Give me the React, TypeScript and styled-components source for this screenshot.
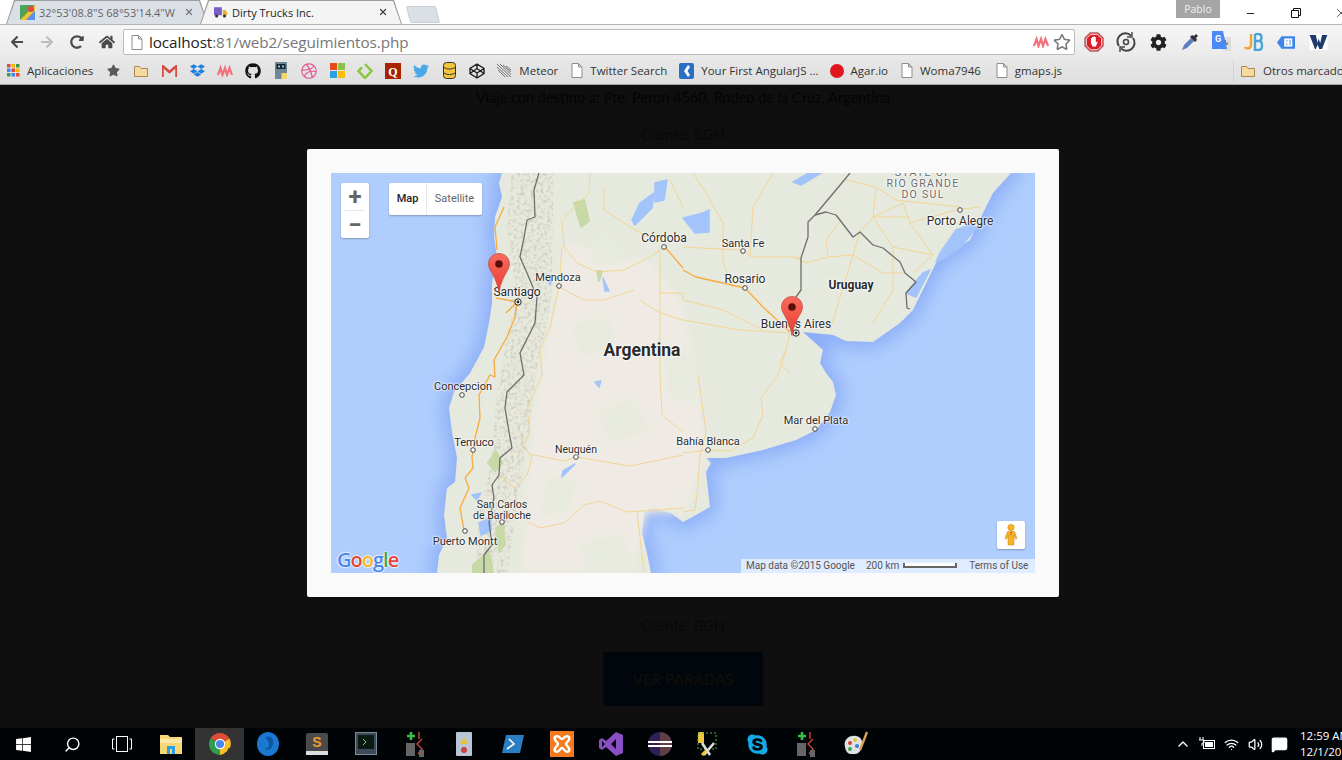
import React from "react";
import styled, { createGlobalStyle } from "styled-components";
import { FaGithub, FaDropbox, FaDribbble, FaTwitter, FaStar, FaCog, FaHome, FaArrowLeft, FaArrowRight, FaRedoAlt, FaSkype, FaWindows, FaRegStar } from "react-icons/fa";
import { ChevronUp, Volume2, Wifi, Search, MessageSquare, Minus, X } from "lucide-react";

const GlobalStyle = createGlobalStyle`
  html, body {
    margin: 0;
    height: 760px;
    overflow: hidden;
    background: #0f0f0f;
  }
  #root { width: 1342px; height: 760px; overflow: hidden; }
`;

/* the capture is a 1366 wide desktop cut off at 1342 */
const Desktop = styled.div`
  width: 1366px;
  height: 760px;
  display: flex;
  flex-direction: column;
  position: relative;
  font-family: "Open Sans", "Liberation Sans", sans-serif;
  overflow: hidden;
`;

const TabStrip = styled.div`
  height: 24px;
  display: flex;
  background: #fff;
  padding-left: 6px;
  position: relative;
`;

const Tab = styled.div<{ $active?: boolean }>`
  width: 202px;
  height: 24px;
  margin-right: -8px;
  padding: 0 14px;
  box-sizing: border-box;
  display: flex;
  align-items: center;
  gap: 4px;
  font-size: 11px;
  color: ${(p) => (p.$active ? "#222" : "#666")};
  background: #9d9d9d;
  clip-path: polygon(0 100%, 8px 0, calc(100% - 8px) 0, 100% 100%);
  position: relative;
  z-index: ${(p) => (p.$active ? 2 : 1)};
  &::before {
    content: "";
    position: absolute;
    inset: 1px 1px 0 1px;
    background: ${(p) => (p.$active ? "#f4f4f4" : "#dbe0e7")};
    clip-path: polygon(0 100%, 8px 0, calc(100% - 8px) 0, 100% 100%);
  }
  & > * { position: relative; }
`;

const TabTitle = styled.span`
  flex: 1;
  white-space: nowrap;
  overflow: hidden;
  margin-right: 4px;
`;

const NewTab = styled.div`
  width: 30px;
  height: 17px;
  margin: 6px 0 0 14px;
  background: #dbe0e7;
  border: 1px solid #c8cdd4;
  box-sizing: border-box;
  transform: skewX(14deg);
  border-radius: 2px;
`;

const ProfileBadge = styled.div`
  position: absolute;
  left: 1176px;
  top: 0;
  width: 44px;
  height: 18px;
  background: #a5a5a5;
  color: #eee;
  font-size: 10.5px;
  display: flex;
  align-items: center;
  justify-content: center;
`;

const WindowButtons = styled.div`
  position: absolute;
  top: 2px;
  left: 1228px;
  display: flex;
  color: #111;
`;

const WindowButton = styled.div`
  width: 45px;
  height: 22px;
  display: flex;
  align-items: center;
  justify-content: center;
`;

const Toolbar = styled.div`
  height: 35px;
  box-sizing: border-box;
  border-top: 1px solid #b4b4b4;
  background: linear-gradient(#f6f6f6, #e9e9e9);
  display: flex;
  align-items: center;
`;

const NavButton = styled.div<{ $dim?: boolean }>`
  width: 30px;
  height: 24px;
  display: flex;
  align-items: center;
  justify-content: center;
  color: ${(p) => (p.$dim ? "#bdbdbd" : "#4a4a4a")};
`;

const NavGroup = styled.div`
  display: flex;
  padding-left: 2px;
  width: 123px;
  box-sizing: border-box;
  flex: none;
`;

const Omnibox = styled.div`
  width: 952px;
  height: 26px;
  flex: none;
  box-sizing: border-box;
  background: #fff;
  border: 1px solid #bcbcbc;
  border-radius: 2px;
  display: flex;
  align-items: center;
  padding: 0 3px 0 7px;
  font-family: "Open Sans", sans-serif;
  font-size: 15.3px;
  letter-spacing: -0.1px;
`;

const UrlHost = styled.span`
  color: #222;
  margin-left: 6px;
`;

const UrlRest = styled.span`
  color: #777;
  flex: 1;
`;

const BookmarkStar = styled(FaRegStar)`
  margin-left: 4px;
`;

const Extensions = styled.div`
  display: flex;
  padding-left: 3px;
`;

const Extension = styled.div`
  width: 32px;
  height: 26px;
  display: flex;
  align-items: center;
  justify-content: center;
`;

const BookmarkBar = styled.div`
  height: 26px;
  box-sizing: border-box;
  border-bottom: 1px solid #a8a8a8;
  background: linear-gradient(#e7e7e7, #dfdfdf);
  display: flex;
  align-items: center;
  padding: 0 0 2px 7px;
  font-size: 11.5px;
  color: #333;
  white-space: nowrap;
`;

const Bookmark = styled.div<{ $gap?: number }>`
  display: flex;
  align-items: center;
  gap: 7px;
  margin-right: ${(p) => p.$gap ?? 12}px;
`;

const BookmarkIcon = styled.div`
  width: 28px;
  height: 16px;
  flex: none;
  display: flex;
  align-items: center;
  justify-content: center;
`;

const BookmarkIconRow = styled.div`
  display: flex;
  margin-right: 5px;
`;

const OtherBookmarks = styled(Bookmark)`
  margin-left: auto;
  width: 126px;
  border-left: 1px solid #d2d2d2;
  padding-left: 6px;
  height: 22px;
  margin-right: 0;
`;

const PageBody = styled.main`
  flex: 1;
  background: #0f0f0f;
  display: flex;
  flex-direction: column;
  align-items: center;
  padding: 3px 0 22px;
  font-family: Lato, "Open Sans", sans-serif;
  font-size: 14.5px;
  color: #040404;
`;

const TripLine = styled.div`
  line-height: 20px;
`;

const ClientLine = styled.div<{ $push?: boolean }>`
  line-height: 20px;
  margin-top: ${(p) => (p.$push ? "auto" : "17px")};
  color: #080808;
`;

const StopsButton = styled.div`
  width: 160px;
  height: 54px;
  margin-top: 16px;
  background: #00060c;
  border-radius: 2px;
  display: flex;
  align-items: center;
  justify-content: center;
  font-size: 15px;
  font-weight: 700;
  color: #0f0c09;
`;

const Overlay = styled.div`
  position: absolute;
  left: 0;
  right: 0;
  top: 149px;
  display: flex;
  justify-content: center;
`;

const Modal = styled.div`
  background: #fafafa;
  padding: 24px;
  border-radius: 2px;
`;

const MapCanvas = styled.div`
  width: 704px;
  height: 400px;
  position: relative;
  overflow: hidden;
  background: #afcdfd;
  font-family: Roboto, sans-serif;
`;

const MapDrawing = styled.svg`
  display: block;
`;

const PlaceLabel = styled.div<{ $x: number; $y: number; $size?: number; $bold?: boolean }>`
  position: absolute;
  left: ${(p) => p.$x}px;
  top: ${(p) => p.$y + 1}px;
  transform: translate(-50%, -50%);
  font-size: ${(p) => p.$size ?? 11}px;
  font-weight: ${(p) => (p.$bold ? 700 : 400)};
  line-height: 1.05;
  color: #2b2b2b;
  text-align: center;
  white-space: nowrap;
  text-shadow: 0 0 2px #fff, 0 0 2px #fff, 0 0 3px #fff;
`;

const RegionLabel = styled(PlaceLabel)`
  color: #6b6b6b;
  letter-spacing: 1.3px;
  font-size: 10.5px;
`;

const PinIcon = styled.svg<{ $x: number; $y: number }>`
  position: absolute;
  left: ${(p) => p.$x}px;
  top: ${(p) => p.$y}px;
`;

const ZoomControl = styled.div`
  position: absolute;
  left: 10px;
  top: 10px;
  width: 28px;
  height: 55px;
  background: #fff;
  border-radius: 2px;
  box-shadow: 0 1px 2px rgba(0, 0, 0, 0.25);
  display: flex;
  flex-direction: column;
  align-items: center;
  color: #666;
`;

const ZoomButton = styled.div`
  flex: 1;
  width: 100%;
  display: flex;
  align-items: center;
  justify-content: center;
  font-size: 24px;
  font-weight: 700;
  line-height: 1;
`;

const ZoomDivider = styled.div`
  width: 20px;
  height: 1px;
  background: #e6e6e6;
`;

const MapTypeControl = styled.div`
  position: absolute;
  left: 58px;
  top: 10px;
  height: 32px;
  width: 93px;
  display: flex;
  background: #fff;
  border-radius: 2px;
  box-shadow: 0 1px 2px rgba(0, 0, 0, 0.25);
  font-size: 11px;
`;

const MapTypeButton = styled.div<{ $active?: boolean }>`
  display: flex;
  align-items: center;
  justify-content: center;
  padding-bottom: 2px;
  width: ${(p) => (p.$active ? "38px" : "55px")};
  color: ${(p) => (p.$active ? "#222" : "#666")};
  font-weight: ${(p) => (p.$active ? 500 : 400)};
  border-right: ${(p) => (p.$active ? "1px solid #e6e6e6" : "none")};
  box-sizing: border-box;
`;

const PegmanBox = styled.div`
  position: absolute;
  right: 10px;
  bottom: 24px;
  width: 28px;
  height: 28px;
  background: #fff;
  border-radius: 2px;
  box-shadow: 0 1px 2px rgba(0, 0, 0, 0.25);
  display: flex;
  align-items: center;
  justify-content: center;
`;

const MapFooter = styled.div`
  position: absolute;
  right: 0;
  bottom: 0;
  height: 14px;
  width: 294px;
  box-sizing: border-box;
  padding: 0 0 1px 5px;
  background: rgba(255, 255, 255, 0.6);
  display: flex;
  align-items: center;
  font-size: 10px;
  color: #555;
  white-space: nowrap;
`;

const MapData = styled.span`
  width: 120px;
`;

const ScaleBar = styled.div`
  width: 54px;
  height: 5px;
  margin: 0 12px 0 4px;
  background: #fff;
  border: 2px solid #666;
  border-top: none;
  box-sizing: border-box;
`;

const GoogleLogo = styled.div`
  position: absolute;
  left: 6px;
  bottom: 0;
  font-family: "Open Sans", sans-serif;
  font-size: 20px;
  font-weight: 600;
  line-height: 26px;
  letter-spacing: -1px;
  text-shadow: 0 0 2px #fff, 0 0 2px #fff, 0 0 2px #fff;
`;

const Letter = styled.span<{ $c: string }>`
  color: ${(p) => p.$c};
`;

const Taskbar = styled.footer`
  height: 32px;
  background: #010406;
  display: flex;
  align-items: center;
  color: #fff;
`;

const TaskItem = styled.div<{ $active?: boolean }>`
  width: 48.9px;
  height: 32px;
  flex: none;
  display: flex;
  align-items: center;
  justify-content: center;
  background: ${(p) => (p.$active ? "#333" : "transparent")};
  &:first-child { margin-left: -0.5px; }
`;

const MirroredSearch = styled(Search)`
  transform: scaleX(-1);
`;

const Tray = styled.div`
  margin-left: auto;
  display: flex;
  align-items: center;
  height: 32px;
`;

const TrayIcon = styled.div`
  width: 24px;
  display: flex;
  justify-content: center;
`;

const Clock = styled.div`
  width: 66px;
  margin-left: 9px;
  font-size: 11.5px;
  line-height: 16px;
  white-space: nowrap;
`;

type P = number[][];
const d = (pts: P) => pts.map((p, i) => `${i ? "L" : "M"}${p[0]} ${p[1]}`).join("");

const land: P = [[171,0],[168,10],[171,24],[164,44],[163,64],[166,84],[161,110],[161,130],[158,150],[153,174],[139,200],[123,219],[118,235],[121,259],[126,285],[124,309],[116,315],[113,342],[116,365],[108,382],[106,400],[320,400],[316,380],[311,360],[313,340],[320,335],[340,340],[352,349],[365,342],[379,334],[375,299],[380,290],[375,285],[395,285],[432,277],[465,267],[485,257],[499,239],[505,222],[502,209],[495,200],[489,190],[492,177],[472,159],[502,162],[515,168],[542,169],[569,150],[582,137],[605,90],[639,67],[652,40],[662,20],[680,0]];
const pampa: P = [[235,70],[320,90],[350,130],[370,230],[375,285],[352,340],[316,340],[300,400],[190,400],[195,320],[205,230],[225,120]];
const andes: P = [[180,0],[222,0],[222,60],[220,130],[205,200],[198,260],[186,330],[176,400],[145,400],[148,340],[160,290],[165,230],[175,170],[183,110],[176,60]];
const blotches: P[] = [
  [[255,55],[290,60],[300,90],[262,92]],
  [[240,150],[275,140],[285,170],[250,185]],
  [[265,240],[300,225],[320,255],[280,270]],
  [[215,300],[245,310],[235,345],[210,340]],
  [[330,170],[360,180],[365,230],[335,225]],
  [[250,370],[290,360],[300,395],[255,400]],
];
const border: P[] = [
  [[208,0],[203,17],[204,44],[196,47],[193,65],[189,84],[196,100],[206,124],[204,150],[189,180],[193,202],[176,219],[174,235],[178,259],[181,275],[169,285],[168,302],[161,312],[163,325],[158,349],[161,372],[153,382],[153,400]],
  [[519,0],[505,17],[484,42],[477,49],[477,64],[470,85],[470,117],[465,124]],
  [[484,42],[495,39],[505,42],[522,64],[529,59],[542,72],[552,75],[569,89],[574,100],[585,109],[575,120],[576,135],[579,136]],
];
const highways: P[] = [
  [[173,34],[164,54],[166,77]],
  [[186,129],[184,144],[176,164],[163,187],[164,204],[159,202],[148,222],[149,245],[144,265],[141,285],[142,295],[134,305],[138,315],[129,335],[133,357]],
  [[165,125],[186,129],[175,140]],
  [[352,97],[365,104],[414,115],[432,134],[459,159]],
  [[334,74],[352,95]],
];
const roads: P[] = [
  [[231,47],[233,74],[246,90],[266,99],[293,97],[319,84],[333,74]],
  [[228,114],[253,127],[273,127],[303,117]],
  [[329,120],[352,120],[352,127],[392,137],[432,157]],
  [[309,127],[329,140],[352,147],[409,157],[459,160],[455,177],[449,190],[459,200]],
  [[329,77],[329,202],[331,242],[352,259]],
  [[273,14],[273,37],[299,54],[323,67]],
  [[259,0],[258,20],[233,44]],
  [[339,7],[352,34]],
  [[231,74],[228,114],[219,154],[209,177],[211,202],[196,235],[199,259],[193,272],[201,285],[196,302],[184,315],[168,302]],
  [[199,281],[233,288],[246,284],[269,288],[299,293],[352,282]],
  [[196,349],[209,355],[233,350],[253,332],[269,328],[296,339],[352,335]],
  [[306,339],[313,399]],
  [[367,202],[375,259],[369,282],[367,312],[364,337],[352,339]],
  [[352,280],[377,277],[399,278],[422,265],[432,242],[430,225],[447,202],[455,177]],
  [[352,74],[409,77],[422,84],[462,84],[475,90],[497,84],[495,67],[509,49]],
  [[362,0],[375,20],[392,50],[392,90],[402,115]],
  [[442,0],[422,34],[419,84]],
  [[522,82],[499,157]],
  [[497,84],[522,82],[552,100],[572,100]],
  [[529,59],[522,82]],
  [[562,74],[562,117],[542,150]],
  [[602,82],[582,100]],
  [[562,74],[602,82],[579,50],[625,37],[649,34]],
  [[545,14],[542,44],[529,59]],
  [[579,44],[542,44],[572,30],[579,50]],
  [[515,7],[545,14],[565,27],[629,34]],
  [[542,44],[562,74]],
  [[470,85],[462,84]],
];
const water: P[] = [
  [[324,10],[336,7],[333,27],[324,29]],
  [[301,47],[309,30],[323,20],[321,35],[304,52]],
  [[352,45],[372,40],[378,37],[378,59],[364,60]],
  [[462,9],[478,0],[490,0],[470,12]],
  [[605,89],[609,80],[625,57],[642,51],[645,55],[630,74],[615,84]],
  [[575,120],[592,100],[599,97],[585,124]],
  [[217,108],[222,104],[219,112]],
  [[272,105],[278,118],[274,118]],
  [[232,298],[244,291],[231,304]],
  [[148,350],[160,345],[160,358],[150,362]],
  [[141,322],[150,320],[146,327]],
  [[270,208],[268,214],[264,209]],
];
const greens: P[] = [
  [[243,30],[253,27],[258,48],[250,54]],
  [[266,98],[271,98],[268,108]],
  [[157,290],[165,278],[171,290],[164,298]],
  [[165,355],[172,350],[174,372],[168,378]],
  [[142,392],[158,378],[162,400],[142,400]],
];

type DotProps = { x: number; y: number; major?: boolean };
function CityDot({ x, y, major }: DotProps) {
  return major ? (
    <g>
      <circle cx={x} cy={y} r={3.2} fill="#fff" stroke="#222" />
      <circle cx={x} cy={y} r={1.4} fill="#222" />
    </g>
  ) : (
    <circle cx={x} cy={y} r={2.3} fill="#fff" stroke="#444" />
  );
}

function MapPin({ x, y }: { x: number; y: number }) {
  return (
    <PinIcon $x={x} $y={y} width={22} height={40} viewBox="0 0 22 40">
      <defs>
        <linearGradient id="pinFill" x1="0" y1="0" x2="0" y2="1">
          <stop offset="0" stopColor="#f76c60" />
          <stop offset="1" stopColor="#ea3b2e" />
        </linearGradient>
      </defs>
      <path d="M11 .5C5 .5.5 5 .5 11c0 7 7.5 11 10.5 28.5C14 22 21.5 18 21.5 11 21.5 5 17 .5 11 .5Z" fill="url(#pinFill)" stroke="#c9473c" strokeWidth={0.7} />
      <circle cx={11} cy={11} r={3.8} fill="#5a1009" />
    </PinIcon>
  );
}

function MapArt() {
  return (
    <MapDrawing width={704} height={400} viewBox="0 0 704 400">
      <defs>
        <filter id="coastBlur" x="-10%" y="-10%" width="120%" height="120%">
          <feGaussianBlur stdDeviation="9" />
        </filter>
        <filter id="softEdge"><feGaussianBlur stdDeviation="4" /></filter>
        <filter id="mountains" x="0" y="0" width="100%" height="100%">
          <feTurbulence type="fractalNoise" baseFrequency="0.3" numOctaves="2" seed="4" result="n" />
          <feColorMatrix in="n" type="matrix" values="0 0 0 0 0.6  0 0 0 0 0.61  0 0 0 0 0.54  0 0 0 2.8 -1.25" result="shade" />
          <feComposite in="shade" in2="SourceGraphic" operator="in" result="cut" />
          <feMerge><feMergeNode in="SourceGraphic" /><feMergeNode in="cut" /></feMerge>
        </filter>
      </defs>
      <path d={d(land) + "Z"} fill="#8cadf8" stroke="#8cadf8" strokeWidth={14} filter="url(#coastBlur)" />
      <path d={d(land) + "Z"} fill="#e6e9de" />
      <path d={d(pampa) + "Z"} fill="#efebe4" filter="url(#softEdge)" />
      {blotches.map((b, i) => <path key={i} d={d(b) + "Z"} fill="#e7eadf" filter="url(#softEdge)" />)}
      <path d={d(andes) + "Z"} fill="#e8e8dc" filter="url(#mountains)" />
      {greens.map((g, i) => <path key={i} d={d(g) + "Z"} fill="#c6d9a6" stroke="#c6d9a6" strokeWidth={2} strokeLinejoin="round" />)}
      {water.map((w, i) => <path key={i} d={d(w) + "Z"} fill="#a3c3fb" stroke="#a3c3fb" strokeWidth={1.5} strokeLinejoin="round" />)}
      {roads.map((r, i) => <path key={i} d={d(r)} fill="none" stroke="#f3d594" strokeWidth={1} strokeLinejoin="round" />)}
      {highways.map((r, i) => <path key={i} d={d(r)} fill="none" stroke="#f9ab3c" strokeWidth={1.3} strokeLinejoin="round" />)}
      {border.map((r, i) => <path key={i} d={d(r)} fill="none" stroke="#6e6e6e" strokeWidth={1.3} strokeLinejoin="round" />)}
      <CityDot x={187} y={129} major />
      <CityDot x={465} y={160} major />
      <CityDot x={228} y={113} />
      <CityDot x={333} y={74} />
      <CityDot x={412} y={78} />
      <CityDot x={414} y={115} />
      <CityDot x={629} y={37} />
      <CityDot x={131} y={222} />
      <CityDot x={142} y={277} />
      <CityDot x={245} y={284} />
      <CityDot x={171} y={349} />
      <CityDot x={134} y={358} />
      <CityDot x={377} y={277} />
      <CityDot x={484} y={256} />
    </MapDrawing>
  );
}

function Pegman() {
  return (
    <svg width={14} height={22} viewBox="0 0 14 22">
      <circle cx={7} cy={3.5} r={3.2} fill="#f9b324" stroke="#b98a1c" strokeWidth={0.5} />
      <path d="M3.5 7.5h7l2.500 7-1.500.5-1.500-4V21H4v-10l-1.500 4-1.500-.5Z" fill="#f9b324" stroke="#b98a1c" strokeWidth={0.5} />
      <path d="M6 8h2l-1 4Z" fill="#d9622b" />
    </svg>
  );
}

function AppsGrid() {
  const colors = ["#e5493a", "#f5b400", "#3a9b4f", "#4285f4", "#e5493a", "#f5b400", "#3a9b4f", "#4285f4", "#e5493a"];
  return (
    <svg width={13} height={13} viewBox="0 0 13 13">
      {colors.map((c, i) => <rect key={i} x={(i % 3) * 4.5} y={Math.floor(i / 3) * 4.5} width={3.5} height={3.5} fill={c} />)}
    </svg>
  );
}

function FolderIcon({ size = 16 }: { size?: number }) {
  return (
    <svg width={size} height={size} viewBox="0 0 16 16">
      <path d="M1.500 3.500h5l1.500 2h6.500v8h-13Z" fill="#f6d9a0" stroke="#a98b52" />
    </svg>
  );
}

function PageIcon() {
  return (
    <svg width={12} height={15} viewBox="0 0 12 15">
      <path d="M1 .5h6.500L11 4v10.500H1Z M7.500 .5V4H11" fill="#fff" stroke="#8d8d8d" />
    </svg>
  );
}

function MechaIcon() {
  return (
    <svg width={16} height={12} viewBox="0 0 16 12">
      <path d="M1 10 3.500 3 5.500 10 8 3 10 10 12.500 3 15 10" fill="none" stroke="#f4727c" strokeWidth={2.2} />
    </svg>
  );
}

function MapsFavicon() {
  return (
    <svg width={15} height={15} viewBox="0 0 15 15">
      <rect width={15} height={15} rx={1} fill="#4fa25a" />
      <path d="M0 15 15 0v6L6 15Z" fill="#f2c230" />
      <path d="M6 15 15 6v9Z" fill="#5b8ff0" />
      <circle cx={11} cy={4} r={3} fill="#e2483b" />
    </svg>
  );
}

function TruckFavicon() {
  return (
    <svg width={14} height={13} viewBox="0 0 16 14">
      <path d="M0 1h9v9H0Z" fill="#7a5cc4" />
      <path d="M10 4h3l2 3v3h-5Z" fill="#e0b23a" />
      <circle cx={3} cy={11} r={1.8} fill="#333" />
      <circle cx={12} cy={11} r={1.8} fill="#333" />
    </svg>
  );
}

function StopIcon() {
  return (
    <svg width={20} height={20} viewBox="0 0 20 20">
      <path d="M6 .5h8L19.500 6v8L14 19.500H6L.5 14V6Z" fill="#d9202a" stroke="#888" strokeWidth={0.6} />
      <path d="M6.500 2.200h7l4.300 4.300v7l-4.300 4.300h-7l-4.300-4.300v-7Z" fill="none" stroke="#fff" />
      <path d="M7 9V6h1v3-4h1.300v4-4.500h1.300V9V5h1.200v6l1.200-1.500.8.500-2 4.500H8.500L7 11Z" fill="#fff" />
    </svg>
  );
}

function SyncIcon() {
  return (
    <svg width={20} height={20} viewBox="0 0 20 20" fill="none" stroke="#444" strokeWidth={2}>
      <path d="M15 3.500A8 8 0 0 0 3 14" />
      <path d="M5 16.500A8 8 0 0 0 17 6" />
      <circle cx={10} cy={10} r={2.5} strokeWidth={1.5} />
      <path d="M16 0v5h-5" strokeWidth={1.4} />
      <path d="M4 20v-5h5" strokeWidth={1.4} />
    </svg>
  );
}

function DropperIcon() {
  return (
    <svg width={20} height={20} viewBox="0 0 20 20">
      <path d="M2 18 4 13 11 6l3 3-7 7Z" fill="#5c7fc4" />
      <path d="M10 5l2-2 2 1 2-2 2 2-2 2 1 2-2 2Z" fill="#333" />
    </svg>
  );
}

function TranslateIcon() {
  return (
    <svg width={20} height={22} viewBox="0 0 20 22">
      <path d="M7 6h12v14H11Z" fill="#ddd" />
      <path d="M0 0h11l4 18H0Z" fill="#4a8af4" />
      <text x={3} y={11} fontSize={9} fontWeight={700} fontFamily="Roboto, sans-serif" fill="#fff">G</text>
      <path d="M13 9l1.500 5 1.500-2.500" stroke="#666" fill="none" />
    </svg>
  );
}

function JBIcon() {
  return (
    <svg width={20} height={18} viewBox="0 0 20 18" fill="none" strokeWidth={2.4}>
      <path d="M7 1v11c0 4-5 4-6 2" stroke="#f0a22e" />
      <path d="M11 1h3.500c4 0 4 7 0 7h-3.500m0 0h4c4 0 4 9 0 9h-4V1" stroke="#4aa4da" />
    </svg>
  );
}

function TagIcon() {
  return (
    <svg width={18} height={15} viewBox="0 0 20 16">
      <path d="M5 1h15v14H5L0 8Z" fill="#3f84e8" />
      <rect x={8} y={3.5} width={9} height={9} fill="#fff" />
      <path d="M11 5v2m0 2v2M14 5c1 2 1 4 0 6" stroke="#3f84e8" fill="none" />
    </svg>
  );
}

function WordIcon() {
  return (
    <svg width={19} height={16} viewBox="0 0 20 18">
      <rect width={20} height={18} fill="#fff" />
      <path d="M0 1h7l2 9 1-5 2 5 2-9h6l-6 16h-3l-2-5-2 5H6Z" fill="#1d3a6e" />
    </svg>
  );
}

function MsSquares() {
  return (
    <svg width={15} height={15} viewBox="0 0 15 15">
      <rect width={7} height={7} fill="#e64a19" />
      <rect x={8} width={7} height={7} fill="#8bc34a" />
      <rect y={8} width={7} height={7} fill="#2a9fe6" />
      <rect x={8} y={8} width={7} height={7} fill="#fbbc05" />
    </svg>
  );
}

function GmailM() {
  return (
    <svg width={15} height={12} viewBox="0 0 15 12">
      <path d="M.5 12V1L7.500 7 14.500 1v11" fill="none" stroke="#d54c3f" strokeWidth={2.5} />
    </svg>
  );
}

function DeviceApp() {
  return (
    <svg width={12} height={17} viewBox="0 0 12 17">
      <rect width={12} height={17} fill="#6f8795" />
      <rect x={1.5} y={2} width={9} height={5} fill="#16252e" />
      <rect x={3} y={3.5} width={2} height={2} fill="#7fd0e0" />
      <rect x={7} y={3.5} width={2} height={2} fill="#7fd0e0" />
      <rect x={6.5} y={11} width={5.5} height={6} fill="#f2d670" />
    </svg>
  );
}

function GreenDiamond() {
  return (
    <svg width={16} height={16} viewBox="0 0 16 16">
      <path d="M8 1 14.500 8 8 15 1.500 8 5 4.500" fill="none" stroke="#8cc63f" strokeWidth={2.5} />
    </svg>
  );
}

function QuoraBox() {
  return (
    <svg width={16} height={16} viewBox="0 0 16 16">
      <rect width={16} height={16} fill="#a82400" />
      <text x={8} y={12.5} textAnchor="middle" fontSize={12} fontWeight={700} fontFamily="Liberation Serif, serif" fill="#fff">Q</text>
    </svg>
  );
}

function DbCylinder() {
  return (
    <svg width={13} height={17} viewBox="0 0 13 17">
      <rect x={0.5} y={0.5} width={12} height={16} rx={3} fill="#f2c53d" stroke="#333" />
      <path d="M1 5.500c3 2 8 2 11 0M1 11c3 2 8 2 11 0" fill="none" stroke="#333" />
    </svg>
  );
}

function CubeOutline() {
  return (
    <svg width={16} height={16} viewBox="0 0 16 16" fill="none" stroke="#222" strokeWidth={1.4}>
      <path d="M8 1 15 5.500v5L8 15 1 10.500v-5ZM8 1v4.500M15 5.500 8 10 1 5.500M8 15v-5M1 10.500 8 5.500l7 5" />
    </svg>
  );
}

function MeteorIcon() {
  return (
    <svg width={16} height={15} viewBox="0 0 16 15" stroke="#555" strokeWidth={0.8}>
      <path d="M1 1 15 14M4 1 15 11.500M1 4 12 14M7 2 15 9M2 7 9 14M10 3 15 7" />
    </svg>
  );
}

function AngularBadge() {
  return (
    <svg width={15} height={16} viewBox="0 0 15 16">
      <rect width={15} height={16} rx={2} fill="#2a6fc4" />
      <path d="M9 2 5 8l4 6 2-2-2.500-4L11 4Z" fill="#fff" />
    </svg>
  );
}

function FolderTask() {
  return (
    <svg width={22} height={20} viewBox="0 0 22 20">
      <path d="M0 1h8l2 2h12v17H0Z" fill="#f7d774" />
      <rect y={5} width={22} height={4} fill="#fbe8a6" />
      <rect x={7} y={12} width={8} height={8} fill="#2a9fe6" />
      <rect x={10} y={15} width={2} height={5} fill="#f7d774" />
    </svg>
  );
}

function ChromeLogo() {
  return (
    <svg width={22} height={22} viewBox="0 0 22 22">
      <path d="M11 11 1.500 5.500A11 11 0 0 1 20.500 5.500Z" fill="#dd4b39" />
      <path d="M11 11H20.500A11 11 0 0 1 11 22Z" fill="#f6c026" />
      <path d="M11 22A11 11 0 0 1 1.500 5.500L11 11Z" fill="#2f9e4f" />
      <path d="M11 11 20.500 5.500A11 11 0 0 1 20.900 15Z" fill="#f6c026" />
      <circle cx={11} cy={11} r={5.2} fill="#fff" />
      <circle cx={11} cy={11} r={4} fill="#4a86e8" />
    </svg>
  );
}

function GlobeTask() {
  return (
    <svg width={22} height={24} viewBox="0 0 22 24">
      <ellipse cx={11} cy={12} rx={11} ry={12} fill="#1a78d0" />
      <path d="M9 5c5-2 8 2 7 7s-5 7-8 5c3-1 5-3 4-6s-3-3-3-6Z" fill="#0f559e" />
    </svg>
  );
}

function SublimeTask() {
  return (
    <svg width={22} height={24} viewBox="0 0 22 24">
      <rect y={1} width={22} height={22} rx={2} fill="#4a4a4a" />
      <rect y={19} width={22} height={4} fill="#ddd" />
      <text x={11} y={15} textAnchor="middle" fontSize={14} fontWeight={700} fontFamily="Liberation Sans, sans-serif" fill="#f09a30">S</text>
    </svg>
  );
}

function TerminalTask() {
  return (
    <svg width={22} height={24} viewBox="0 0 22 24">
      <rect x={0.5} y={0.5} width={21} height={22} fill="#3c4a5a" stroke="#7a8a9a" />
      <rect x={3} y={3} width={16} height={14} fill="#0c1a14" />
      <path d="M8 7l3 3-3 3" stroke="#6fd06f" fill="none" />
    </svg>
  );
}

function GitTask() {
  return (
    <svg width={20} height={26} viewBox="0 0 20 26">
      <path d="M2 5h8M6 1v8" stroke="#3dbb4a" strokeWidth={2.6} />
      <path d="M14 1v7M17 8l-5 5 5 5-4 5" stroke="#c9453a" strokeWidth={1.4} fill="none" />
      <rect x={1} y={12} width={9} height={13} fill="#666" />
      <rect x={14} y={19} width={5} height={7} fill="#666" />
    </svg>
  );
}

function NotesTask() {
  return (
    <svg width={16} height={24} viewBox="0 0 16 24">
      <rect width={16} height={24} rx={1} fill="#b9c4d4" />
      <path d="M8 5l4 7H4Z" fill="#e9c23a" />
      <circle cx={8} cy={18} r={3} fill="#c9453a" />
    </svg>
  );
}

function PowerShellTask() {
  return (
    <svg width={22} height={20} viewBox="0 0 22 20">
      <path d="M4 1h18l-4 18H0Z" fill="#2a7fc4" />
      <path d="M7 5l5 5-7 5" stroke="#fff" strokeWidth={1.6} fill="none" />
    </svg>
  );
}

function XamppTask() {
  return (
    <svg width={24} height={26} viewBox="0 0 24 26">
      <rect width={24} height={26} fill="#f47b20" />
      <path d="M5 6c4-3 5 2 7 2s3-5 7-2c2 3-3 5-3 7s5 4 3 7c-4 3-5-3-7-3s-3 6-7 3c-2-3 3-5 3-7S3 9 5 6Z" fill="none" stroke="#fff" strokeWidth={2.4} />
    </svg>
  );
}

function VisualStudioTask() {
  return (
    <svg width={24} height={26} viewBox="0 0 24 26">
      <path d="M17 1 24 4v18l-7 3-10-9-4 3-3-2V9l3-2 4 3Zm0 7-5 5 5 5ZM3 10v6l3-3Z" fill="#8a4fc4" fillRule="evenodd" />
    </svg>
  );
}

function EclipseTask() {
  return (
    <svg width={24} height={24} viewBox="0 0 24 24">
      <circle cx={12} cy={12} r={12} fill="#2c2255" />
      <path d="M12 0a12 12 0 0 1 0 24Z" fill="#f7941e" opacity={0.25} />
      <rect y={9} width={24} height={2} fill="#fff" />
      <rect y={13} width={24} height={2} fill="#fff" />
    </svg>
  );
}

function ToolsTask() {
  return (
    <svg width={24} height={26} viewBox="0 0 24 26">
      <rect x={2} y={1} width={6} height={11} fill="#f2c53d" />
      <rect x={2} y={2} width={18} height={16} fill="none" stroke="#5aa84a" strokeDasharray="2 2" />
      <path d="M8 24 18 12M14 24 6 12" stroke="#ddd" strokeWidth={2.6} />
      <path d="M6 24 10 20" stroke="#f2c53d" strokeWidth={3} />
    </svg>
  );
}

function PaletteTask() {
  return (
    <svg width={26} height={26} viewBox="0 0 26 26">
      <path d="M3 16C1 9 7 4 14 5c6 1 8 7 5 13-2 5-5 5-8 5s-7 0-8-7Z" fill="#dfe3e6" />
      <circle cx={8} cy={12} r={2} fill="#d9453a" />
      <circle cx={13} cy={9} r={2} fill="#e8c33a" />
      <circle cx={8} cy={18} r={2} fill="#3aa84a" />
      <circle cx={15} cy={15} r={2} fill="#3a7fd9" />
      <path d="M25 1 18 19" stroke="#d9a15a" strokeWidth={2.4} />
    </svg>
  );
}

function BatteryTray() {
  return (
    <svg width={16} height={14} viewBox="0 0 16 14" fill="none" stroke="#fff">
      <rect x={4.5} y={3.5} width={11} height={8} />
      <rect x={6} y={5} width={8} height={5} fill="#fff" stroke="none" />
      <path d="M1 0v3M4 0v3M0 3h5v3H3v3" />
    </svg>
  );
}

const bookmarkGlyphs = [
  <FaStar key="star" size={13} color="#5a5a5a" />,
  <FolderIcon key="folder" />,
  <GmailM key="gmail" />,
  <FaDropbox key="dropbox" size={15} color="#1f7fe0" />,
  <MechaIcon key="mecha" />,
  <FaGithub key="github" size={16} color="#111" />,
  <DeviceApp key="device" />,
  <FaDribbble key="dribbble" size={16} color="#e8528d" />,
  <MsSquares key="ms" />,
  <GreenDiamond key="diamond" />,
  <QuoraBox key="quora" />,
  <FaTwitter key="twitter" size={16} color="#4aa8e8" />,
  <DbCylinder key="db" />,
  <CubeOutline key="cube" />,
];

const taskIcons = [
  <FaWindows key="start" size={17} color="#fff" />,
  <MirroredSearch key="search" size={17} color="#fff" />,
  <svg key="view" width={20} height={16} viewBox="0 0 20 16" fill="none" stroke="#fff"><rect x={4.5} y={0.5} width={11} height={15} /><path d="M2.500 3H.5v10h2M17.500 3h2v10h-2" /></svg>,
  <FolderTask key="explorer" />,
  <ChromeLogo key="chrome" />,
  <GlobeTask key="globe" />,
  <SublimeTask key="sublime" />,
  <TerminalTask key="terminal" />,
  <GitTask key="git" />,
  <NotesTask key="notes" />,
  <PowerShellTask key="ps" />,
  <XamppTask key="xampp" />,
  <VisualStudioTask key="vs" />,
  <EclipseTask key="eclipse" />,
  <ToolsTask key="tools" />,
  <FaSkype key="skype" size={23} color="#14a9e6" />,
  <GitTask key="git2" />,
  <PaletteTask key="palette" />,
];

export default function App() {
  return (
    <Desktop>
      <GlobalStyle />
      <TabStrip>
        <Tab>
          <MapsFavicon />
          <TabTitle>32°53'08.8"S 68°53'14.4"W</TabTitle>
          <X size={10} strokeWidth={3} color="#777" />
        </Tab>
        <Tab $active>
          <TruckFavicon />
          <TabTitle>Dirty Trucks Inc.</TabTitle>
          <X size={10} strokeWidth={3} color="#444" />
        </Tab>
        <NewTab />
        <ProfileBadge>Pablo</ProfileBadge>
        <WindowButtons>
          <WindowButton><Minus size={11} /></WindowButton>
          <WindowButton>
            <svg width={10} height={10} viewBox="0 0 10 10" fill="none" stroke="#111"><path d="M2.500 2.500v-2h7v7h-2M.5 2.500h7v7h-7Z" /></svg>
          </WindowButton>
          <WindowButton><X size={14} strokeWidth={1.2} /></WindowButton>
        </WindowButtons>
      </TabStrip>

      <Toolbar>
        <NavGroup>
          <NavButton><FaArrowLeft size={14} /></NavButton>
          <NavButton $dim><FaArrowRight size={14} /></NavButton>
          <NavButton><FaRedoAlt size={14} /></NavButton>
          <NavButton><FaHome size={16} /></NavButton>
        </NavGroup>
        <Omnibox>
          <PageIcon />
          <UrlHost>localhost</UrlHost>
          <UrlRest>:81/web2/seguimientos.php</UrlRest>
          <MechaIcon />
          <BookmarkStar size={18} color="#777" />
        </Omnibox>
        <Extensions>
          <Extension><StopIcon /></Extension>
          <Extension><SyncIcon /></Extension>
          <Extension><FaCog size={17} color="#222" /></Extension>
          <Extension><DropperIcon /></Extension>
          <Extension><TranslateIcon /></Extension>
          <Extension><JBIcon /></Extension>
          <Extension><TagIcon /></Extension>
          <Extension><WordIcon /></Extension>
        </Extensions>
      </Toolbar>

      <BookmarkBar>
        <Bookmark $gap={6}><AppsGrid />Aplicaciones</Bookmark>
        <BookmarkIconRow>
          {bookmarkGlyphs.map((g) => <BookmarkIcon key={g.key}>{g}</BookmarkIcon>)}
        </BookmarkIconRow>
        <Bookmark $gap={13}><MeteorIcon />Meteor</Bookmark>
        <Bookmark $gap={12}><PageIcon />Twitter Search</Bookmark>
        <Bookmark $gap={11}><AngularBadge />Your First AngularJS ...</Bookmark>
        <Bookmark $gap={13}>
          <svg width={14} height={14} viewBox="0 0 14 14"><circle cx={7} cy={7} r={7} fill="#e0161e" /></svg>
          Agar.io
        </Bookmark>
        <Bookmark $gap={15}><PageIcon />Woma7946</Bookmark>
        <Bookmark><PageIcon />gmaps.js</Bookmark>
        <OtherBookmarks><FolderIcon />Otros marcadores</OtherBookmarks>
      </BookmarkBar>

      <PageBody>
        <TripLine>Viaje con destino a: Pte. Peron 4560, Rodeo de la Cruz, Argentina</TripLine>
        <ClientLine>Cliente: BGH</ClientLine>
        <ClientLine $push>Cliente: BGH</ClientLine>
        <StopsButton>VER PARADAS</StopsButton>
      </PageBody>

      <Overlay>
        <Modal>
          <MapCanvas>
            <MapArt />
            <RegionLabel $x={592} $y={10}>STATE OF<br />RIO GRANDE<br />DO SUL</RegionLabel>
            <PlaceLabel $x={186} $y={118} $size={12}>Santiago</PlaceLabel>
            <PlaceLabel $x={227} $y={104}>Mendoza</PlaceLabel>
            <PlaceLabel $x={333} $y={64} $size={12}>Córdoba</PlaceLabel>
            <PlaceLabel $x={412} $y={70}>Santa Fe</PlaceLabel>
            <PlaceLabel $x={414} $y={105} $size={12}>Rosario</PlaceLabel>
            <PlaceLabel $x={520} $y={111} $size={12} $bold>Uruguay</PlaceLabel>
            <PlaceLabel $x={465} $y={150} $size={12}>Buenos Aires</PlaceLabel>
            <PlaceLabel $x={629} $y={47} $size={12}>Porto Alegre</PlaceLabel>
            <PlaceLabel $x={311} $y={176} $size={17.5} $bold>Argentina</PlaceLabel>
            <PlaceLabel $x={132} $y={213}>Concepcion</PlaceLabel>
            <PlaceLabel $x={143} $y={269}>Temuco</PlaceLabel>
            <PlaceLabel $x={245} $y={276} $size={10.5}>Neuquén</PlaceLabel>
            <PlaceLabel $x={171} $y={336} $size={10.5}>San Carlos<br />de Bariloche</PlaceLabel>
            <PlaceLabel $x={134} $y={368}>Puerto Montt</PlaceLabel>
            <PlaceLabel $x={377} $y={268}>Bahía Blanca</PlaceLabel>
            <PlaceLabel $x={485} $y={247}>Mar del Plata</PlaceLabel>
            <MapPin x={157} y={80} />
            <MapPin x={450} y={123} />
            <ZoomControl>
              <ZoomButton>+</ZoomButton>
              <ZoomDivider />
              <ZoomButton>−</ZoomButton>
            </ZoomControl>
            <MapTypeControl>
              <MapTypeButton $active>Map</MapTypeButton>
              <MapTypeButton>Satellite</MapTypeButton>
            </MapTypeControl>
            <PegmanBox><Pegman /></PegmanBox>
            <GoogleLogo>
              <Letter $c="#4a85ee">G</Letter>
              <Letter $c="#e2463a">o</Letter>
              <Letter $c="#f3b81e">o</Letter>
              <Letter $c="#4a85ee">g</Letter>
              <Letter $c="#3aa757">l</Letter>
              <Letter $c="#e2463a">e</Letter>
            </GoogleLogo>
            <MapFooter>
              <MapData>Map data ©2015 Google</MapData>
              <span>200 km</span>
              <ScaleBar />
              <span>Terms of Use</span>
            </MapFooter>
          </MapCanvas>
        </Modal>
      </Overlay>

      <Taskbar>
        {taskIcons.map((icon, i) => (
          <TaskItem key={icon.key} $active={i === 4}>{icon}</TaskItem>
        ))}
        <Tray>
          <TrayIcon><ChevronUp size={16} color="#fff" /></TrayIcon>
          <TrayIcon><BatteryTray /></TrayIcon>
          <TrayIcon><Wifi size={15} color="#fff" /></TrayIcon>
          <TrayIcon><Volume2 size={15} color="#fff" /></TrayIcon>
          <TrayIcon><MessageSquare size={17} color="#fff" fill="#fff" /></TrayIcon>
          <Clock>12:59 AM<br />12/1/2015</Clock>
        </Tray>
      </Taskbar>
    </Desktop>
  );
}
